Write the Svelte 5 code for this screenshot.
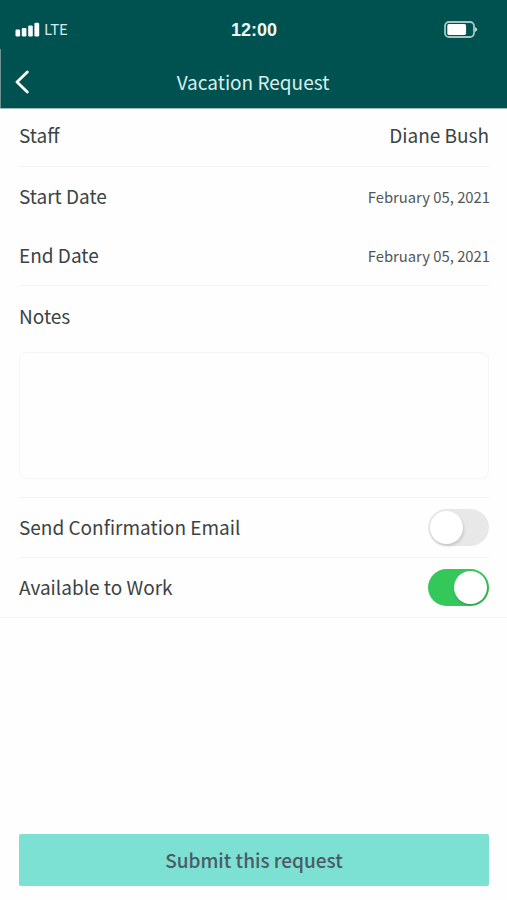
<script>
  let confirmation = $state(false);
  let available = $state(true);
</script>

{#snippet toggle(on, flip, label)}
  <button class="toggle" class:on role="switch" aria-checked={on} aria-label={label} onclick={flip}>
    <span class="knob"></span>
  </button>
{/snippet}

<main class="screen">
  <header>
    <div class="status">
      <div class="signal">
        <svg width="25" height="16" viewBox="0 0 25 16" fill="#fff">
          <rect x="0.5" y="7.5" width="4.6" height="7" rx="1.2" />
          <rect x="6.8" y="6" width="4.6" height="8.5" rx="1.2" />
          <rect x="13.2" y="3.5" width="4.6" height="11" rx="1.2" />
          <rect x="19.4" y="0.8" width="4.8" height="13.7" rx="1.2" />
        </svg>
        <span class="lte">LTE</span>
      </div>
      <span class="time">12:00</span>
      <svg class="battery" width="34" height="18" viewBox="0 0 34 18">
        <rect x="1" y="1" width="29" height="15" rx="4" fill="none" stroke="#a4c8c5" stroke-width="1.8" />
        <rect x="3.3" y="3.1" width="18.8" height="10.8" rx="1.6" fill="#fff" />
        <path d="M31 6Q35.4 8.5 31 11Z" fill="#b9d7d4" />
      </svg>
    </div>
    <div class="nav">
      <svg class="back" width="16" height="26" viewBox="0 0 16 26">
        <path d="M14.3 3L4 13L14.3 23" fill="none" stroke="#fff" stroke-width="2.8" stroke-linecap="round" stroke-linejoin="round" />
      </svg>
      <h1>Vacation Request</h1>
    </div>
  </header>

  <section class="fields">
    <div class="row staff line"><span class="label">Staff</span><span class="label">Diane Bush</span></div>
    <div class="row start"><span class="label">Start Date</span><span class="date">February 05, 2021</span></div>
    <div class="row line"><span class="label">End Date</span><span class="date">February 05, 2021</span></div>
    <div class="notes line">
      <label for="notes">Notes</label>
      <textarea id="notes"></textarea>
    </div>
    <div class="row line">
      <span class="label">Send Confirmation Email</span>
      {@render toggle(confirmation, () => (confirmation = !confirmation), 'Send Confirmation Email')}
    </div>
    <div class="row work">
      <span class="label">Available to Work</span>
      {@render toggle(available, () => (available = !available), 'Available to Work')}
    </div>
  </section>

  <footer><button class="submit">Submit this request</button></footer>
</main>

<style>
  :global(body) { margin: 0; background: #fefefe; }
  .screen {
    box-sizing: border-box;
    width: 100%;
    height: 900px;
    display: flex;
    flex-direction: column;
    background: #fefefe;
    color: #3b4343;
    font: 400 19px/30px "Noto Sans CJK SC", "Noto Sans", sans-serif;
  }
  header { height: 109px; background: #005251; color: #fff; box-sizing: border-box; border-bottom: 1px solid #a3bcbc; }
  .status { height: 49px; padding: 10px 29px 0 15px; box-sizing: border-box; display: grid; grid-template-columns: 216px 46px 1fr; align-items: center; }
  .signal { display: flex; align-items: center; gap: 4px; }
  .lte { font-size: 15px; line-height: 20px; color: #d5e9e7; margin-top: -1px; }
  .time { font: 700 18px/20px "Liberation Sans", Arial, sans-serif; color: #edf8f6; }
  .battery { justify-self: end; }
  .nav { height: 59px; box-sizing: border-box; padding: 7px 14px 1px 12px; display: grid; grid-template-columns: 32px 1fr 32px; align-items: center; border-left: 1px solid #6b9291; }
  h1 { margin: 0; text-align: center; font-size: 19px; line-height: 30px; font-weight: 400; color: #d8eeec; }
  .fields { border-bottom: 1px solid #f0f1f1; }
  .row { height: 60px; margin: 0 18px 0 19px; box-sizing: border-box; display: flex; align-items: center; justify-content: space-between; }
  .label { padding-bottom: 2px; }
  .line { border-bottom: 1px solid #f3f3f3; }
  .staff { height: 58px; padding-bottom: 3px; }
  .start { height: 59px; }
  .date { font-size: 14.8px; color: #505656; margin-right: -1px; }
  .notes { height: 212px; box-sizing: border-box; margin: 0 18px 0 19px; padding-top: 15px; display: flex; flex-direction: column; }
  label { height: 51px; }
  textarea { box-sizing: border-box; width: 100%; height: 127px; border: 1px solid #f5f5f5; border-radius: 8px; background: transparent; resize: none; }
  .work { height: 59px; }
  .toggle { width: 61px; height: 37px; padding: 2px; border: 0; border-radius: 19px; background: #e8e8e8; display: flex; align-items: center; }
  .knob { width: 33px; height: 33px; border-radius: 50%; background: #fff; box-shadow: 1px 2px 3px rgb(0 0 0 / 15%); }
  .on { background: #34c759; justify-content: flex-end; }
  footer { margin: auto 18px 14px 19px; display: flex; }
  .submit { flex: 1; height: 52px; padding: 0; border: 0; border-radius: 2px; background: #7ce0d3; color: #4b5b66; font: 500 19px/30px "Noto Sans CJK SC", "Noto Sans", sans-serif; }
</style>
